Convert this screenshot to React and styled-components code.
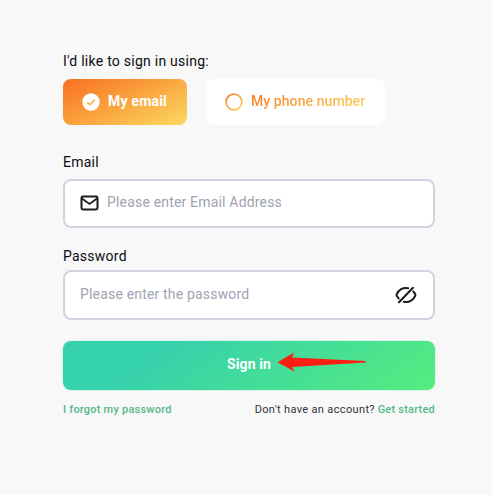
import React, { useState } from "react";
import styled, { createGlobalStyle } from "styled-components";

export default function App() {
  const [method, setMethod] = useState("email");
  const [showPassword, setShowPassword] = useState(false);

  return (
    <Page>
      <GlobalStyle />
      <Form onSubmit={(e) => e.preventDefault()}>
        <Label as="p">I'd like to sign in using:</Label>
        <Methods>
          <MethodButton
            type="button"
            $active={method === "email"}
            onClick={() => setMethod("email")}
          >
            <MethodIcon active={method === "email"} />
            <span>My email</span>
          </MethodButton>
          <MethodButton
            type="button"
            $active={method === "phone"}
            onClick={() => setMethod("phone")}
          >
            <MethodIcon active={method === "phone"} />
            <span>My phone number</span>
          </MethodButton>
        </Methods>

        <Label htmlFor="email" $gap="8px">Email</Label>
        <Field $height="49px">
          <MailIcon />
          <input id="email" type="email" placeholder="Please enter Email Address" />
        </Field>

        <Label htmlFor="password" $gap="5px">Password</Label>
        <Field $height="50px" $last>
          <input
            id="password"
            type={showPassword ? "text" : "password"}
            placeholder="Please enter the password"
          />
          <IconButton
            type="button"
            aria-label="Toggle password"
            onClick={() => setShowPassword((prev) => !prev)}
          >
            <EyeOffIcon />
          </IconButton>
        </Field>

        <SubmitButton type="submit">
          Sign in
          <Arrow viewBox="0 0 90 20">
            <path d="M0.5 10.2 17 0.5 15 5.5 88.8 9 88.8 10.4 15 15 18 19.8Z" fill="#ff1e14" />
          </Arrow>
        </SubmitButton>

        <Footer>
          <Link href="#">I forgot my password</Link>
          <p>
            <span>Don't have an account?</span> <Link href="#">Get started</Link>
          </p>
        </Footer>
      </Form>
    </Page>
  );
}

function MethodIcon({ active }) {
  return (
    <svg width="18" height="18" viewBox="0 0 18 18" fill="none">
      <defs>
        <linearGradient id="ring" x1="0" y1="0" x2="1" y2="1">
          <stop stopColor="#f97622" />
          <stop offset="1" stopColor="#fbd75e" />
        </linearGradient>
      </defs>
      {active ? (
        <>
          <circle cx="9" cy="9" r="8.7" fill="#fff" />
          <path
            d="M5.2 9.3 7.9 11.6 12.8 6.8"
            stroke="#fab34b"
            strokeWidth="1.6"
            strokeLinejoin="round"
          />
        </>
      ) : (
        <circle cx="9" cy="9" r="7.9" stroke="url(#ring)" strokeWidth="1.6" />
      )}
    </svg>
  );
}

function MailIcon() {
  return (
    <svg width="19" height="17" viewBox="0 0 19 17" fill="none" stroke="#1b1b20" strokeWidth="2">
      <rect x="1.5" y="1.5" width="16" height="13" rx="1.4" />
      <path d="M2 3.5 9.5 9 17 3.5" strokeWidth="1.7" />
    </svg>
  );
}

function EyeOffIcon() {
  return (
    <svg
      width="22"
      height="18"
      viewBox="0 0 22 18"
      fill="none"
      stroke="#1b1b20"
      strokeWidth="2"
      strokeLinecap="round"
    >
      <path d="M13.2 2.3C8 .8 3.4 4 1.7 8.3c-.2.5-.2.9 0 1.4.5 1.1 1.2 2 2 2.8" />
      <path d="M8.8 15.7c5.2 1.5 9.8-1.7 11.5-6 .2-.5.2-.9 0-1.4-.5-1.1-1.2-2-2-2.8" />
      <path d="M4 16.2 18 1.8" />
    </svg>
  );
}

const GlobalStyle = createGlobalStyle`
  * {
    box-sizing: border-box;
    margin: 0;
    padding: 0;
  }
  body {
    background: #f8f8f8;
    font-family: Roboto, sans-serif;
  }
  button,
  input {
    font-family: inherit;
    border: none;
    outline: none;
  }
  button {
    cursor: pointer;
  }
  svg {
    display: block;
    flex-shrink: 0;
  }
`;

const Page = styled.main`
  min-height: 100vh;
  padding: 52px 57px 0 63px;
`;

const Form = styled.form`
  display: flex;
  flex-direction: column;
`;

const Label = styled.label`
  height: 18px;
  margin-bottom: ${({ $gap }) => $gap || "9px"};
  color: #0c0c10;
  font-size: 14px;
  font-weight: 400;
  line-height: 18px;
  letter-spacing: 0.25px;
`;

const Methods = styled.div`
  display: flex;
  gap: 19px;
  margin-bottom: 28px;
`;

const MethodButton = styled.button`
  display: flex;
  align-items: center;
  gap: 8px;
  height: 46px;
  padding: 0 20px 0 19px;
  border-radius: 8px;
  background: ${({ $active }) =>
    $active ? "linear-gradient(155deg, #f97020 0%, #fbd960 100%)" : "#fff"};
  font-size: 14px;
  font-weight: ${({ $active }) => ($active ? 700 : 500)};
  letter-spacing: ${({ $active }) => ($active ? "0.2px" : "0.08px")};
  line-height: 18px;
  span {
    padding-bottom: 2px;
    color: ${({ $active }) => ($active ? "#fff" : "transparent")};
    background: ${({ $active }) =>
      $active ? "none" : "linear-gradient(155deg, #f97622 0%, #fbd75e 100%)"};
    background-clip: text;
    -webkit-background-clip: text;
  }
`;

const Field = styled.div`
  display: flex;
  align-items: center;
  gap: 8px;
  height: ${({ $height }) => $height};
  margin-bottom: ${({ $last }) => ($last ? "21px" : "19px")};
  padding: 0 16px 0 15px;
  border: 2px solid #d0d4df;
  border-radius: 8px;
  background: #fff;
  input {
    flex: 1;
    min-width: 0;
    height: 20px;
    margin-bottom: 3px;
    background: transparent;
    color: #1b1b20;
    font-size: 14px;
    letter-spacing: 0.18px;
    &::placeholder {
      color: #a0a3b1;
    }
  }
`;

const IconButton = styled.button`
  background: none;
`;

const SubmitButton = styled.button`
  position: relative;
  height: 49px;
  padding-bottom: 3px;
  border-radius: 8px;
  background: linear-gradient(145deg, #36d1ad 25%, #55ec7e 100%);
  box-shadow: 0 0 0 1px rgba(69, 222, 152, 0.15);
  color: #fff;
  font-size: 14px;
  font-weight: 700;
  letter-spacing: 0.1px;
`;

// Pointer drawn over the button, next to its label
const Arrow = styled.svg`
  position: absolute;
  top: 11px;
  left: 214px;
  width: 90px;
  height: 20px;
`;

const Footer = styled.div`
  display: flex;
  justify-content: space-between;
  margin-top: 13px;
  color: #333338;
  font-size: 11px;
  font-weight: 500;
  line-height: 14px;
  span {
    font-weight: 400;
    letter-spacing: 0.35px;
  }
`;

const Link = styled.a`
  color: #55b886;
  letter-spacing: 0.22px;
  text-decoration: none;
`;
